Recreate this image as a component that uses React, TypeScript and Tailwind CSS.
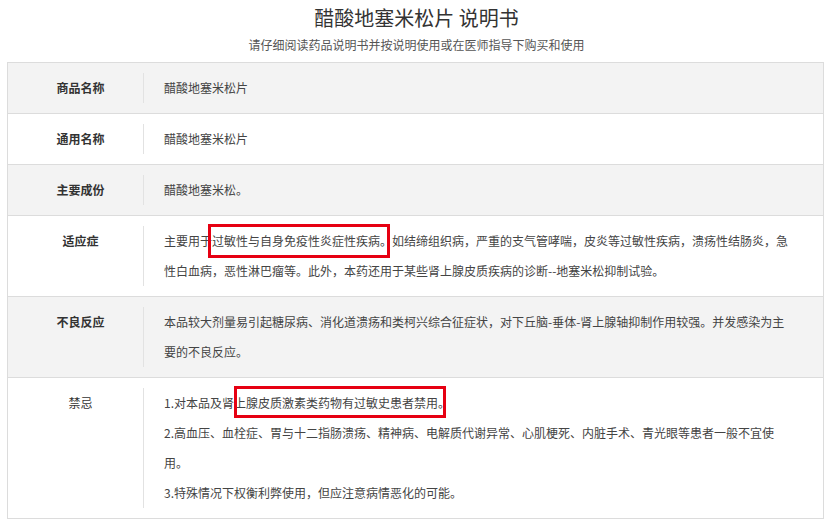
import React from 'react';

interface Row {
  label: string;
  lines: React.ReactNode;
  bold?: boolean;
  gray?: boolean;
  mark?: { left: number; top: number; width: number; height: number };
}

const rows: Row[] = [
  { label: '商品名称', lines: '醋酸地塞米松片', bold: true, gray: true },
  { label: '通用名称', lines: '醋酸地塞米松片', bold: true },
  { label: '主要成份', lines: '醋酸地塞米松。', bold: true, gray: true },
  {
    label: '适应症',
    lines:
      '主要用于过敏性与自身免疫性炎症性疾病。如结缔组织病，严重的支气管哮喘，皮炎等过敏性疾病，溃疡性结肠炎，急性白血病，恶性淋巴瘤等。此外，本药还用于某些肾上腺皮质疾病的诊断--地塞米松抑制试验。',
    bold: true,
    mark: { left: 44, top: -2, width: 182, height: 34 },
  },
  {
    label: '不良反应',
    lines:
      '本品较大剂量易引起糖尿病、消化道溃疡和类柯兴综合征症状，对下丘脑-垂体-肾上腺轴抑制作用较强。并发感染为主要的不良反应。',
    bold: true,
    gray: true,
  },
  {
    label: '禁忌',
    lines: (
      <>
        <div>1.对本品及肾上腺皮质激素类药物有过敏史患者禁用。</div>
        <div>2.高血压、血栓症、胃与十二指肠溃疡、精神病、电解质代谢异常、心肌梗死、内脏手术、青光眼等患者一般不宜使用。</div>
        <div>3.特殊情况下权衡利弊使用，但应注意病情恶化的可能。</div>
      </>
    ),
    mark: { left: 70, top: -2, width: 212, height: 32 },
  },
];

export default function App() {
  return (
    <div
      className="w-[833px] h-[526px] overflow-hidden bg-white text-[#333]"
      style={{ fontFamily: '"Noto Sans CJK SC", "Noto Sans", sans-serif' }}
    >
      <div className="pt-[4px] text-center">
        <h1 className="text-[20px] leading-[28px] font-normal text-[#333]">醋酸地塞米松片 说明书</h1>
        <p className="mt-[3px] text-[12px] leading-[20px] text-[#555]">请仔细阅读药品说明书并按说明使用或在医师指导下购买和使用</p>
      </div>

      <div className="mt-[7px] ml-[7px] w-[817px] border-x border-b border-[#dcdcdc]">
        {rows.map((r, i) => (
          <div
            key={i}
            className={`flex py-[10px] border-t border-[#dcdcdc] ${r.gray ? 'bg-[#f3f3f3]' : 'bg-white'}`}
          >
            <div
              className={`w-[135px] shrink-0 pl-[10px] text-center text-[12px] leading-[30px] ${
                r.bold ? 'font-bold' : 'font-normal'
              }`}
            >
              {r.label}
            </div>
            <div className="relative flex-1 border-l border-[#e2e2e2] pl-[20px] pr-[30px] text-[12px] leading-[30px] text-[#444]">
              {r.lines}
              {r.mark && (
                <div
                  className="absolute border-[3px] border-[#e60012]"
                  style={{
                    left: 20 + r.mark.left,
                    top: r.mark.top,
                    width: r.mark.width,
                    height: r.mark.height,
                  }}
                />
              )}
            </div>
          </div>
        ))}
      </div>
    </div>
  );
}
